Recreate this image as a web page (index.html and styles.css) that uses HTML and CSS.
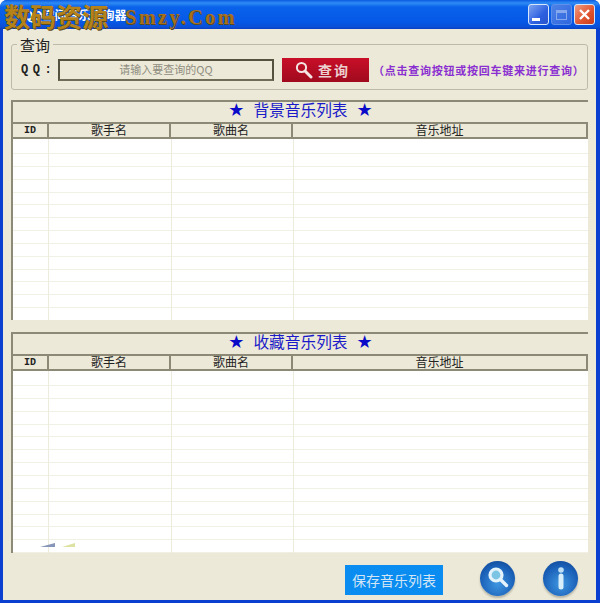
FILE: index.html
```html
<!DOCTYPE html>
<html lang="zh-CN">
<head>
  <meta charset="UTF-8">
  <title>QQ音乐查询器</title>
  <link rel="stylesheet" href="styles.css">
</head>
<body>

  <div class="window">
    <div class="titlebar">
      <span class="title">QQ空间音乐查询器</span>
      <div class="win-buttons">
        <div class="win-btn"><span class="glyph-min"></span></div>
        <div class="win-btn off"><span class="glyph-max"></span></div>
        <div class="win-btn close">
          <svg width="13" height="13" viewBox="0 0 13 13"><path d="M2 2l9 9M11 2l-9 9" stroke="#fff" stroke-width="2.4"/></svg>
        </div>
      </div>
    </div>

    <!-- Watermark -->
    <div class="watermark"><span class="wm-cn">数码资源</span><span class="wm-en">Smzy.Com</span></div>

    <div class="client">
      <fieldset class="search">
        <legend>查询</legend>
        <div class="search-row">
          <span class="qq-label">QQ:</span>
          <div class="qq-input">请输入要查询的QQ</div>
          <button class="search-btn" type="button">
            <svg width="18" height="18" viewBox="0 0 18 18"><circle cx="6.5" cy="6.5" r="4.6" fill="none" stroke="#f4e4e4" stroke-width="2"/><path d="M10 10l6 6" stroke="#f4e4e4" stroke-width="3" stroke-linecap="round"/></svg>
            <span>查询</span>
          </button>
          <span class="hint">（点击查询按钮或按回车键来进行查询）</span>
        </div>
      </fieldset>

      <section class="panel">
        <div class="panel-title"><span class="star">★</span><span>背景音乐列表</span><span class="star">★</span></div>
        <div class="col-head">
          <div class="col-id">ID</div><div class="col-a">歌手名</div><div class="col-b">歌曲名</div><div class="col-url">音乐地址</div>
        </div>
        <div class="rows"></div>
      </section>

      <section class="panel second">
        <div class="panel-title"><span class="star">★</span><span>收藏音乐列表</span><span class="star">★</span></div>
        <div class="col-head">
          <div class="col-id">ID</div><div class="col-a">歌手名</div><div class="col-b">歌曲名</div><div class="col-url">音乐地址</div>
        </div>
        <div class="rows">
          <span class="smear blue"></span>
          <span class="smear green"></span>
        </div>
      </section>

      <div class="footer">
        <button class="save-btn" type="button">保存音乐列表</button>
        <div class="round-btn">
          <svg width="26" height="26" viewBox="0 0 26 26"><circle cx="11" cy="10" r="6" fill="#7cc4e4" stroke="#e4f3fc" stroke-width="3.2"/><path d="M15.5 14.5l6 6" stroke="#e4f3fc" stroke-width="3.4" stroke-linecap="round"/></svg>
        </div>
        <div class="round-btn">
          <svg width="24" height="28" viewBox="0 0 24 28"><circle cx="12" cy="6" r="2.8" fill="#bcdff5"/><path d="M12 12v11" stroke="#d8eefa" stroke-width="5" stroke-linecap="round"/></svg>
        </div>
      </div>
    </div>
  </div>

</body>
</html>
```

FILE: styles.css
```css
* {
  box-sizing: border-box;
}

body {
  margin: 0;
  padding: 0;
  font-family: "Noto Sans CJK SC", "Liberation Sans", sans-serif;
  background: #fff;
}

.window {
  position: relative;
  width: 600px;
  height: 603px;
  display: flex;
  flex-direction: column;
  background: #0a3fd0;
  border-radius: 7px 7px 0 0;
  overflow: hidden;
}

.titlebar {
  height: 29px;
  flex: none;
  display: flex;
  align-items: center;
  justify-content: space-between;
  padding: 0 5px 0 24px;
  background: linear-gradient(#0a5ae0 0, #2f8cf5 3px, #0a62ea 7px, #0558e6 22px, #0a4fd8 27px, #0a3ec0 29px);
}

.title {
  color: #fff;
  font-size: 12px;
  font-weight: bold;
}

.win-buttons {
  display: flex;
  gap: 2px;
}

.win-btn {
  width: 21px;
  height: 21px;
  display: flex;
  align-items: center;
  justify-content: center;
  border: 1px solid #d8e6fb;
  border-radius: 3px;
  background: linear-gradient(135deg, #7ea4f0, #2c5fe0 60%, #2a55cc);
}

.win-btn.off {
  border-color: #5f8fe8;
  background: linear-gradient(135deg, #4d82e6, #2f66de);
}

.win-btn.close {
  background: linear-gradient(135deg, #ee9a80, #e0532e 60%, #c83c1c);
}

.glyph-min {
  width: 8px;
  height: 3px;
  margin: 10px 5px 0 0;
  background: #fff;
}

.glyph-max {
  width: 11px;
  height: 10px;
  border: 1px solid #86a8ee;
  border-top-width: 3px;
}

.watermark {
  position: absolute;
  left: 4px;
  top: 0;
  height: 30px;
  display: flex;
  align-items: center;
  color: #a8701a;
  font-weight: bold;
  white-space: nowrap;
  text-shadow: 1px 1px 0 #5a4a20;
}

.wm-cn {
  font-size: 26px;
  color: #b5821a;
}

.wm-en {
  margin: 4px 0 0 17px;
  font-family: "Liberation Serif", serif;
  font-size: 20px;
  letter-spacing: 2.5px;
}

.client {
  flex: 1;
  margin: 0 4px 3px 3px;
  padding: 8px 8px 0 8px;
  background: #ece9d8;
  display: flex;
  flex-direction: column;
}

.search {
  height: 53px;
  margin: 0;
  padding: 0 0 0 5px;
  border: 1px solid #bdbaa7;
  border-radius: 3px;
}

.search legend {
  padding: 0 3px;
  font-size: 15px;
  line-height: 15px;
  color: #222;
}

.search-row {
  display: flex;
  align-items: center;
  height: 24px;
  margin-top: 6px;
  padding-left: 4px;
}

.qq-label {
  width: 37px;
  font-family: "Liberation Mono", monospace;
  font-size: 12px;
  font-weight: bold;
  letter-spacing: 4.5px;
  color: #222;
}

.qq-input {
  width: 216px;
  height: 22px;
  border: 2px solid #55533f;
  border-bottom-color: #6f6d58;
  background: #ece9d8;
  color: #8f8d80;
  font-size: 11px;
  line-height: 16px;
  text-align: center;
}

.search-btn {
  width: 87px;
  height: 24px;
  margin-left: 8px;
  padding: 0 6px 0 0;
  display: flex;
  align-items: center;
  justify-content: center;
  gap: 5px;
  border: none;
  background: linear-gradient(#c80f28, #a00a1e);
  color: #eccfcf;
  font-family: inherit;
  font-size: 14px;
  font-weight: bold;
  letter-spacing: 2px;
}

.hint {
  margin-left: 4px;
  font-family: "Noto Sans CJK TC", sans-serif;
  font-size: 11px;
  font-weight: bold;
  letter-spacing: 0.75px;
  color: #8a2fd0;
  white-space: nowrap;
}

.panel {
  margin-top: 10px;
  height: 220px;
  display: flex;
  flex-direction: column;
  border-top: 2px solid #8c8a76;
  border-left: 2px solid #8c8a76;
}

.panel.second {
  margin-top: 12px;
  height: 221px;
}

.panel-title {
  height: 20px;
  flex: none;
  display: flex;
  align-items: center;
  justify-content: center;
  gap: 9px;
  padding-bottom: 4px;
  color: #1a1ac8;
  font-size: 15.7px;
  line-height: 16px;
}

.star {
  font-family: "DejaVu Sans", sans-serif;
  font-size: 18px;
  color: #0a0ac8;
}

.col-head {
  height: 17px;
  flex: none;
  display: flex;
  border-top: 2px solid #8c8a76;
  border-bottom: 2px solid #8c8a76;
  border-right: 2px solid #8c8a76;
  font-size: 12px;
  line-height: 11px;
  color: #222;
  text-align: center;
}

.col-head div {
  border-right: 2px solid #8c8a76;
}

.col-head div:last-child {
  border-right: none;
}

.col-head .col-id {
  width: 36px;
  font-family: "Liberation Mono", monospace;
  font-size: 10px;
  font-weight: bold;
  line-height: 14px;
}

.col-a {
  width: 122px;
}

.col-b {
  width: 122px;
}

.col-url {
  flex: 1;
}

.rows {
  position: relative;
  flex: 1;
  background-color: #fff;
  background-image:
    linear-gradient(90deg, transparent 35px, #ecebdc 35px, #ecebdc 36px, transparent 36px, transparent 158px, #ecebdc 158px, #ecebdc 159px, transparent 159px, transparent 280px, #ecebdc 280px, #ecebdc 281px, transparent 281px),
    repeating-linear-gradient(#fff 0, #fff 1px, #f1f0e4 1px, #f1f0e4 2px, #fff 2px, #fff 12.85px);
  background-position: 0 0, 0 13px;
  background-repeat: no-repeat;
}

.smear {
  position: absolute;
  bottom: 6px;
  width: 15px;
  height: 4px;
  clip-path: polygon(0 100%, 100% 0, 100% 100%);
}

.smear.blue {
  left: 27px;
  background: #8796b8;
}

.smear.green {
  left: 49px;
  width: 13px;
  background: #dde2a0;
}

.footer {
  flex: 1;
  display: flex;
  align-items: center;
  justify-content: flex-end;
  padding: 6px 10px 0 0;
  gap: 28px;
}

.save-btn {
  width: 98px;
  height: 30px;
  margin-right: 9px;
  padding: 0;
  border: none;
  background: #0a8cf0;
  color: #d4e6f5;
  font-family: inherit;
  font-size: 14px;
}

.round-btn {
  width: 35px;
  height: 35px;
  margin-top: -3px;
  display: flex;
  align-items: center;
  justify-content: center;
  border-radius: 50%;
  background: radial-gradient(circle at 50% 65%, #3f96e0, #1a60b8 60%, #0e3f88);
  box-shadow: 0 2px 2px rgba(60, 60, 50, 0.3);
}
```
